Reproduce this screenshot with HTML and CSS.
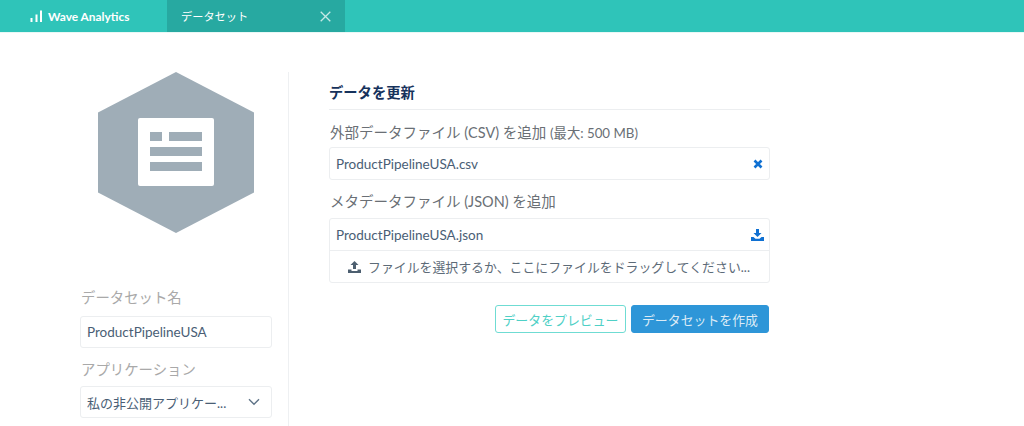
FILE: index.html
```html
<!DOCTYPE html>
<html lang="ja">
<head>
<meta charset="utf-8">
<title>データセット</title>
<link rel="stylesheet" href="styles.css">
</head>
<body>
<header class="tabbar">
  <div class="tab-home">
    <svg class="bars" width="13" height="12" viewBox="0 0 13 12"><rect x="0.5" y="8" width="2" height="4"/><rect x="5.5" y="4.5" width="2" height="7.5"/><rect x="10" y="0.5" width="2" height="11.5"/></svg>
    <span>Wave Analytics</span>
  </div>
  <div class="tab-active">
    <span>データセット</span>
    <svg class="close" width="11" height="11" viewBox="0 0 11 11"><path d="M0.7 0.7L10.3 10.3M10.3 0.7L0.7 10.3"/></svg>
  </div>
</header>
<main class="content">
  <aside class="side">
    <svg class="hex" width="156" height="161" viewBox="0 0 156 161">
      <polygon class="hex-bg" points="78,0 156,40.5 156,120.5 78,161 0,120.5 0,40.5"/>
      <rect class="hex-card" x="40" y="46" width="76" height="68" rx="2"/>
      <rect class="hex-bg" x="52" y="60" width="12" height="9"/>
      <rect class="hex-bg" x="71" y="60" width="33" height="9"/>
      <rect class="hex-bg" x="52" y="75" width="52" height="9"/>
      <rect class="hex-bg" x="52" y="90" width="52" height="9"/>
    </svg>
    <label class="side-label first">データセット名</label>
    <div class="side-field">ProductPipelineUSA</div>
    <label class="side-label">アプリケーション</label>
    <div class="side-field select">
      <span>私の非公開アプリケー...</span>
      <svg class="chev" width="12" height="8" viewBox="0 0 12 8"><path d="M1 1.2L6 6.2L11 1.2"/></svg>
    </div>
  </aside>
  <section class="panel">
    <h2 class="panel-title">データを更新</h2>
    <div class="field-label">外部データファイル (CSV) を追加 <small>(最大: 500 MB)</small></div>
    <div class="file-box">
      <div class="file-row">
        <span>ProductPipelineUSA.csv</span>
        <svg class="icon-x" width="10" height="10" viewBox="0 0 10 10"><path d="M1.5 1.5L8.5 8.5M8.5 1.5L1.5 8.5"/></svg>
      </div>
    </div>
    <div class="field-label second">メタデータファイル (JSON) を追加</div>
    <div class="file-box">
      <div class="file-row">
        <span>ProductPipelineUSA.json</span>
        <svg class="icon-dl" width="13" height="12" viewBox="0 0 13 12"><path d="M5 0H8V4H10.5L6.5 8L2.5 4H5Z"/><path d="M0 8H2.5L4.5 9.8H8.5L10.5 8H13V12H0Z"/></svg>
      </div>
      <div class="drop-row">
        <svg class="icon-ul" width="13" height="12" viewBox="0 0 13 12"><path d="M6.5 0L10.5 4H8V8H5V4H2.5Z"/><path d="M0 8.5H3.5V10H9.5V8.5H13V12H0Z"/></svg>
        <span>ファイルを選択するか、ここにファイルをドラッグしてください...</span>
      </div>
    </div>
    <div class="actions">
      <button class="btn btn-outline">データをプレビュー</button>
      <button class="btn btn-primary">データセットを作成</button>
    </div>
  </section>
</main>
</body>
</html>
```
FILE: styles.css
```css
* { box-sizing: border-box; }
html, body { margin: 0; height: 426px; overflow: hidden; background: #fff; }
body {
  font-family: "Lato", "Noto Sans CJK JP", sans-serif;
  font-size: 13.5px;
  color: #4a5e75;
}
.tabbar {
  height: 33px;
  display: flex;
  background: #2fc4b9;
  border-bottom: 1px solid #e9f8f6;
  color: #fff;
  font-size: 11.9px;
}
.tab-home {
  width: 167px;
  padding-left: 30px;
  display: flex;
  align-items: center;
  gap: 5px;
  font-weight: 700;
}
.bars { fill: #fff; }
.tab-active {
  width: 178px;
  padding: 0 14px 0 14px;
  display: flex;
  align-items: center;
  justify-content: space-between;
  background: #27a9a1;
  font-size: 11.2px;
}
.close { fill: none; stroke: #c5e9e6; stroke-width: 1.3; }
.content { display: flex; padding-top: 39px; }
.side {
  width: 289px;
  height: 354px;
  padding: 0 16px 0 80px;
  border-right: 1px solid #eef0f2;
  display: flex;
  flex-direction: column;
}
.hex { margin-left: 18px; flex: none; display: block; }
.hex-bg { fill: #9fadb7; }
.hex-card { fill: #fff; }
.side-label {
  color: #a9a9a9;
  font-size: 14.4px;
  line-height: 20px;
  padding-left: 1px;
  margin-top: 12px;
  margin-bottom: 6px;
}
.side-label.first { margin-top: 55px; margin-bottom: 8px; }
.side-field {
  width: 192px;
  height: 32px;
  flex: none;
  padding: 0 6px;
  display: flex;
  align-items: center;
  justify-content: space-between;
  border: 1px solid #eceef0;
  border-radius: 3px;
}
.side-field.select { padding-right: 11px; font-size: 13px; }
.chev { fill: none; stroke: #5f7488; stroke-width: 1.4; }
.panel { width: 441px; margin-left: 40px; padding-top: 12px; }
.panel-title {
  margin: 0 0 13px;
  height: 26px;
  font-size: 14.3px;
  line-height: 18px;
  font-weight: 700;
  color: #16325c;
  border-bottom: 1px solid #eceef0;
}
.field-label {
  font-size: 14.5px;
  line-height: 20px;
  margin-bottom: 4px;
  padding-left: 1px;
  color: #6a6f75;
}
.field-label small { font-size: 13.3px; }
.field-label.second { margin-top: 12px; margin-bottom: 6px; }
.file-box { border: 1px solid #eceef0; border-radius: 3px; }
.file-row {
  height: 31px;
  padding: 0 5px 0 6px;
  display: flex;
  align-items: center;
  justify-content: space-between;
}
.file-row span { line-height: 18px; }
.icon-x { fill: none; stroke: #0f70d2; stroke-width: 2.6; margin-right: 1px; }
.icon-dl { fill: #0f70d2; }
.drop-row {
  height: 32px;
  padding-left: 18px;
  display: flex;
  align-items: center;
  gap: 7px;
  border-top: 1px solid #eceef0;
  font-size: 12.9px;
  color: #5d6b78;
}
.icon-ul { fill: #4d5f70; }
.actions { display: flex; justify-content: flex-end; gap: 5px; margin-top: 22px; padding-right: 1px; }
.btn {
  height: 28px;
  padding: 0;
  border-radius: 3px;
  font: inherit;
  font-size: 12.9px;
}
.btn-outline { width: 131px; background: #fff; border: 1px solid #6fdcd3; color: #4fd0c6; }
.btn-primary { width: 138px; background: #2e96d8; border: 1px solid #2e96d8; color: #dcebf6; }
```
